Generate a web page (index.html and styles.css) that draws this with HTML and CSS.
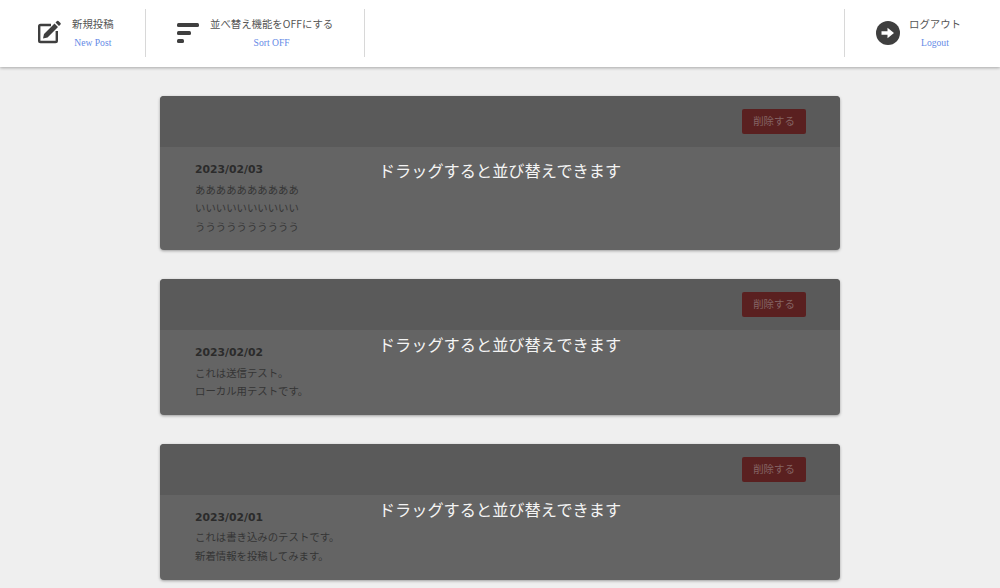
FILE: index.html
```html
<!DOCTYPE html>
<html lang="ja">
<head>
<meta charset="utf-8">
<title>Posts</title>
<link rel="stylesheet" href="styles.css">
</head>
<body>
<header class="topbar">
  <a class="nav-item nav-new">
    <svg class="icon-edit" viewBox="0 0 26 25" width="26" height="25"><path d="M13 6H2.500A1.300 1.300 0 0 0 1.200 7.300v14.400A1.300 1.300 0 0 0 2.500 23h15a1.300 1.300 0 0 0 1.300-1.300V12" fill="none" stroke="#3f3f3f" stroke-width="2.400"/><path d="M5 19.500l1-4.500L16.500 4.500 20 8 9.500 18.500zM17.500 3.500 19 2a1 1 0 0 1 1.400 0l2.100 2.100a1 1 0 0 1 0 1.400L21 7z" fill="#3f3f3f"/></svg>
    <span class="nav-text"><span class="nav-ja">新規投稿</span><span class="nav-en">New Post</span></span>
  </a>
  <a class="nav-item nav-sort">
    <svg class="icon-sort" viewBox="0 0 22 21" width="22" height="21"><rect x="0" y="0" width="22" height="4" rx="1.500" fill="#3f3f3f"/><rect x="0" y="8" width="14" height="4" rx="1.500" fill="#3f3f3f"/><rect x="0" y="16" width="7" height="4" rx="1.500" fill="#3f3f3f"/></svg>
    <span class="nav-text"><span class="nav-ja">並べ替え機能をOFFにする</span><span class="nav-en">Sort OFF</span></span>
  </a>
  <a class="nav-item nav-logout">
    <svg class="icon-logout" viewBox="0 0 24 24" width="24" height="24"><circle cx="12" cy="12" r="12" fill="#3f3f3f"/><path d="M5.500 10.200h6V6.800l6.500 5.200-6.500 5.200v-3.400h-6z" fill="#fff"/></svg>
    <span class="nav-text"><span class="nav-ja">ログアウト</span><span class="nav-en">Logout</span></span>
  </a>
</header>
<main class="list">
  <article class="card">
    <div class="card-head"><button class="delete">削除する</button></div>
    <div class="card-body">
      <p class="date">2023/02/03</p>
      <p class="text">ああああああああああ<br>いいいいいいいいいい<br>うううううううううう</p>
    </div>
    <span class="drag-hint">ドラッグすると並び替えできます</span>
  </article>
  <article class="card">
    <div class="card-head"><button class="delete">削除する</button></div>
    <div class="card-body">
      <p class="date">2023/02/02</p>
      <p class="text">これは送信テスト。<br>ローカル用テストです。</p>
    </div>
    <span class="drag-hint">ドラッグすると並び替えできます</span>
  </article>
  <article class="card">
    <div class="card-head"><button class="delete">削除する</button></div>
    <div class="card-body">
      <p class="date">2023/02/01</p>
      <p class="text">これは書き込みのテストです。<br>新着情報を投稿してみます。</p>
    </div>
    <span class="drag-hint">ドラッグすると並び替えできます</span>
  </article>
</main>
</body>
</html>
```
FILE: styles.css
```css
* { box-sizing: border-box; }
html, body { margin: 0; height: 100%; overflow: hidden; }
body {
  background: #efefef;
  font-family: "DejaVu Sans", "Noto Sans CJK JP", sans-serif;
  color: #333;
}
.topbar {
  height: 67px;
  background: #fff;
  box-shadow: 0 1px 3px rgba(0, 0, 0, .3);
  display: flex;
  align-items: flex-start;
  padding-top: 9px;
}
.nav-item {
  height: 48px;
  display: flex;
  align-items: center;
}
.nav-new { width: 146px; padding-left: 38px; gap: 8px; border-right: 1px solid #d8d8d8; }
.nav-sort { width: 219px; padding-left: 31px; gap: 11px; border-right: 1px solid #d8d8d8; }
.nav-logout { width: 156px; margin-left: auto; padding-left: 31px; gap: 9px; border-left: 1px solid #d8d8d8; }
.icon-edit { margin-bottom: 4px; }
.nav-text {
  display: flex;
  flex-direction: column;
  align-items: center;
  gap: 5px;
  padding-bottom: 2px;
}
.nav-ja {
  font: 10.400px/16px "Noto Sans CJK JP", sans-serif;
  color: #555;
}
.nav-en {
  font: 9.600px/12px "Liberation Serif", serif;
  color: #658ae6;
}
.list {
  width: 680px;
  margin: 29px auto 0;
  display: flex;
  flex-direction: column;
  gap: 28.800px;
}
.card {
  position: relative;
  border-radius: 4px;
  overflow: hidden;
  background: #646464;
  box-shadow: 0 1px 3px rgba(0, 0, 0, .35);
}
.card-head {
  height: 51px;
  background: #5a5a5a;
  display: flex;
  justify-content: flex-end;
  align-items: center;
  padding-right: 34px;
}
.delete {
  width: 64px;
  height: 25px;
  border: 0;
  border-radius: 2px;
  background: #5a2020;
  color: #856464;
  font: 10.400px/23px "Noto Sans CJK JP", sans-serif;
  padding: 0 0 2px;
}
.card-body { padding: 14px 35px 14px; }
.date {
  margin: 0;
  font: bold 10.800px/17px "DejaVu Sans", sans-serif;
  color: #2b2b2b;
}
.text {
  margin: 2.600px 0 0;
  font: 10.400px/18.600px "Noto Sans CJK JP", sans-serif;
  color: #353535;
}
.drag-hint {
  position: absolute;
  left: 0;
  right: 0;
  top: calc(50% - 15px);
  text-align: center;
  font: 16.200px/24px "Noto Sans CJK JP", serif;
  color: #f4f4f4;
}
```
